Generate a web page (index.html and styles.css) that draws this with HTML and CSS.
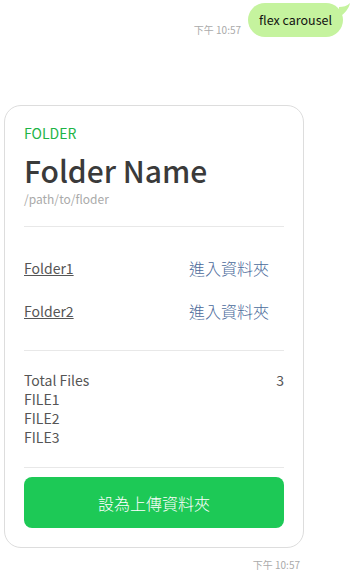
FILE: index.html
```html
<!DOCTYPE html>
<html>
<head>
<meta charset="utf-8">
<link rel="stylesheet" href="styles.css">
</head>
<body>
<div class="chat">
  <div class="row-out">
    <span class="time">下午 10:57</span>
    <div class="bubble">flex carousel
      <svg class="tail" width="12" height="14" viewBox="0 0 12 14"><path d="M0 4 C4 4 8 3 11 0 C10 5 6 11 0 14 Z" fill="#c5f39e"/></svg>
    </div>
  </div>

  <div class="card">
    <div class="label">FOLDER</div>
    <div class="title">Folder Name</div>
    <div class="path">/path/to/floder</div>
    <hr class="sep sep-first">
    <div class="folders">
      <div class="frow"><a class="fname">Folder1</a><span class="enter">進入資料夾</span></div>
      <div class="frow"><a class="fname">Folder2</a><span class="enter">進入資料夾</span></div>
    </div>
    <hr class="sep">
    <div class="files">
      <div class="total"><span>Total Files</span><span>3</span></div>
      <div>FILE1</div>
      <div>FILE2</div>
      <div>FILE3</div>
    </div>
    <hr class="sep">
    <button class="btn">設為上傳資料夾</button>
  </div>
  <div class="time-in">下午 10:57</div>
</div>
</body>
</html>
```

FILE: styles.css
```css
* { box-sizing: border-box; }
body {
  margin: 0;
  background: #fff;
  font-family: "Noto Sans CJK TC", "Noto Sans", sans-serif;
  color: #555;
}
.chat { width: 356px; }
.row-out {
  display: flex;
  justify-content: flex-end;
  align-items: flex-end;
  gap: 7px;
  padding: 3px 13px 0 0;
}
.time {
  font-size: 10px;
  color: #aaa;
  line-height: 12px;
  margin-bottom: 1px;
}
.bubble {
  position: relative;
  background: #c5f39e;
  border-radius: 17px;
  height: 34px;
  padding: 0 11px;
  font-size: 12.5px;
  line-height: 34px;
  color: #111;
}
.tail {
  position: absolute;
  right: -8px;
  top: 0;
}
.card {
  margin: 68px 0 0 4px;
  width: 300px;
  border: 1px solid #ddd;
  border-radius: 17px;
  padding: 17px 19px 19px 19px;
}
.label {
  color: #1db446;
  font-size: 14px;
  line-height: 20px;
}
.title {
  margin-top: 10px;
  font-size: 30px;
  font-weight: 500;
  color: #3a3a3a;
  line-height: 34px;
}
.path {
  margin-top: 4px;
  font-size: 12px;
  color: #aaa;
  line-height: 16px;
}
.sep {
  border: 0;
  border-top: 1px solid #e8e8e8;
  margin: 0;
}
.sep-first { margin-top: 19px; }
.folders {
  padding: 29px 0 30px;
  display: flex;
  flex-direction: column;
  gap: 22px;
}
.frow {
  display: grid;
  grid-template-columns: 1fr 1fr;
  align-items: center;
  height: 21px;
}
.fname {
  font-size: 14px;
  color: #555;
  text-decoration: underline;
}
.enter {
  font-size: 16px;
  font-weight: 300;
  color: #4a6a9a;
  padding-left: 35px;
}
.files {
  padding: 20px 0 20px;
  font-size: 14px;
  line-height: 19px;
  color: #555;
}
.total {
  display: flex;
  justify-content: space-between;
}
.btn {
  display: block;
  width: 100%;
  height: 51px;
  margin-top: 9px;
  border: 0;
  border-radius: 8px;
  background: #1dc956;
  color: #fff;
  font-family: inherit;
  font-size: 16px;
  font-weight: 300;
}
.time-in {
  width: 300px;
  text-align: right;
  font-size: 10px;
  color: #aaa;
  margin-top: 9px;
}
```
